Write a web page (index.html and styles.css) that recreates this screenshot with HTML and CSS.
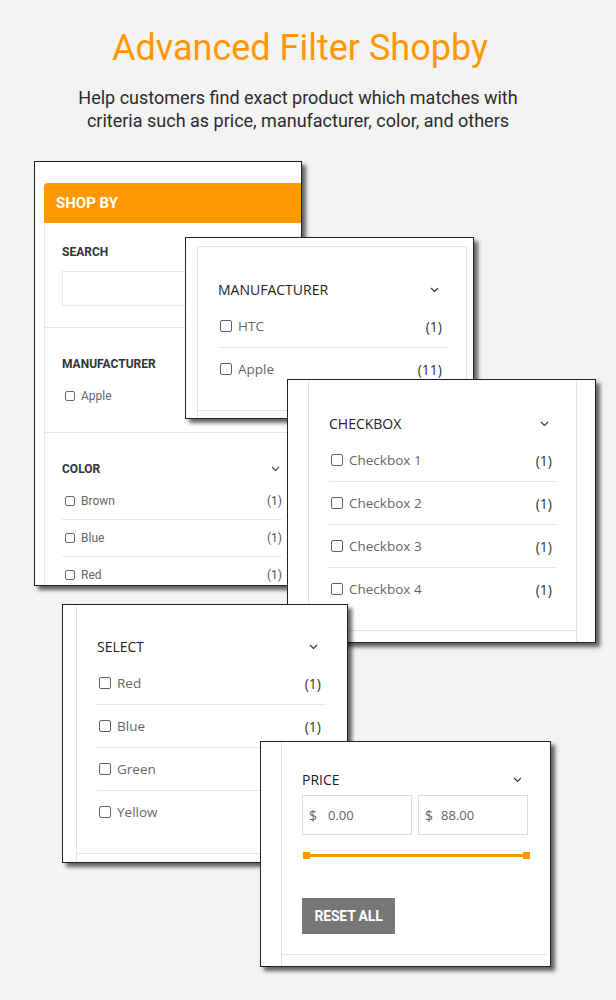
FILE: index.html
```html
<!DOCTYPE html>
<html lang="en">
<head>
<meta charset="utf-8">
<title>Advanced Filter Shopby</title>
<link rel="stylesheet" href="styles.css">
</head>
<body>
<header class="intro">
  <h1 class="intro-title">Advanced Filter Shopby</h1>
  <p class="intro-text">Help customers find exact product which matches with<br>criteria such as price, manufacturer, color, and others</p>
</header>

<main class="stage">
  <!-- Sidebar as it appears in the storefront -->
  <section class="card card-shopby">
    <div class="shopby-head">SHOP BY</div>
    <div class="shopby-panel">
      <div class="sb-block sb-search">
        <div class="sb-title">SEARCH</div>
        <div class="sb-input"></div>
      </div>
      <div class="sb-block">
        <div class="sb-title">MANUFACTURER</div>
        <ul class="sb-list">
          <li class="sb-row"><span class="cb cb-sm"></span><span class="sb-label">Apple</span></li>
        </ul>
      </div>
      <div class="sb-block sb-last">
        <div class="sb-title sb-title-row">COLOR
          <svg class="chev" width="9" height="6" viewBox="0 0 9 6"><path d="M1 1l3.5 3.5L8 1" fill="none" stroke="#444" stroke-width="1.1"/></svg>
        </div>
        <ul class="sb-list">
          <li class="sb-row"><span class="cb cb-sm"></span><span class="sb-label">Brown</span><span class="sb-count">(1)</span></li>
          <li class="sb-row"><span class="cb cb-sm"></span><span class="sb-label">Blue</span><span class="sb-count">(1)</span></li>
          <li class="sb-row"><span class="cb cb-sm"></span><span class="sb-label">Red</span><span class="sb-count">(1)</span></li>
        </ul>
      </div>
    </div>
  </section>

  <!-- Manufacturer filter -->
  <section class="card card-manu">
    <div class="panel panel-right">
      <div class="block block-framed">
        <div class="f-title">MANUFACTURER
          <svg class="chev" width="9" height="6" viewBox="0 0 9 6"><path d="M1 1l3.5 3.5L8 1" fill="none" stroke="#333" stroke-width="1.1"/></svg>
        </div>
        <ul class="f-list">
          <li class="f-row"><span class="cb"></span><span class="f-label">HTC</span><span class="f-count">(1)</span></li>
          <li class="f-row"><span class="cb"></span><span class="f-label">Apple</span><span class="f-count">(11)</span></li>
        </ul>
      </div>
    </div>
  </section>

  <!-- Checkbox filter -->
  <section class="card card-check">
    <div class="panel panel-right">
      <div class="block block-open">
        <div class="f-title">CHECKBOX
          <svg class="chev" width="9" height="6" viewBox="0 0 9 6"><path d="M1 1l3.5 3.5L8 1" fill="none" stroke="#333" stroke-width="1.1"/></svg>
        </div>
        <ul class="f-list">
          <li class="f-row"><span class="cb"></span><span class="f-label">Checkbox 1</span><span class="f-count">(1)</span></li>
          <li class="f-row"><span class="cb"></span><span class="f-label">Checkbox 2</span><span class="f-count">(1)</span></li>
          <li class="f-row"><span class="cb"></span><span class="f-label">Checkbox 3</span><span class="f-count">(1)</span></li>
          <li class="f-row"><span class="cb"></span><span class="f-label">Checkbox 4</span><span class="f-count">(1)</span></li>
        </ul>
      </div>
    </div>
  </section>

  <!-- Select filter -->
  <section class="card card-select">
    <div class="panel">
      <div class="block block-open block-select">
        <div class="f-title">SELECT
          <svg class="chev" width="9" height="6" viewBox="0 0 9 6"><path d="M1 1l3.5 3.5L8 1" fill="none" stroke="#333" stroke-width="1.1"/></svg>
        </div>
        <ul class="f-list">
          <li class="f-row"><span class="cb"></span><span class="f-label">Red</span><span class="f-count">(1)</span></li>
          <li class="f-row"><span class="cb"></span><span class="f-label">Blue</span><span class="f-count">(1)</span></li>
          <li class="f-row"><span class="cb"></span><span class="f-label">Green</span></li>
          <li class="f-row"><span class="cb"></span><span class="f-label">Yellow</span></li>
        </ul>
      </div>
    </div>
  </section>

  <!-- Price filter -->
  <section class="card card-price">
    <div class="panel">
      <div class="block block-open block-price">
        <div class="f-title">PRICE
          <svg class="chev" width="9" height="6" viewBox="0 0 9 6"><path d="M1 1l3.5 3.5L8 1" fill="none" stroke="#333" stroke-width="1.1"/></svg>
        </div>
        <div class="price-inputs">
          <div class="price-box"><span class="cur">$</span><span class="amt amt-min">0.00</span></div>
          <div class="price-box"><span class="cur">$</span><span class="amt">88.00</span></div>
        </div>
        <div class="range">
          <span class="handle"></span>
          <span class="track"></span>
          <span class="handle"></span>
        </div>
        <button class="reset" type="button">RESET ALL</button>
      </div>
    </div>
  </section>
</main>
</body>
</html>
```

FILE: styles.css
```css
* {
  box-sizing: border-box;
}

html,
body {
  margin: 0;
  padding: 0;
}

body {
  width: 616px;
  height: 1000px;
  overflow: hidden;
  background: #f3f3f3;
  font-family: Roboto, "Liberation Sans", sans-serif;
  color: #333;
}

ul {
  list-style: none;
  margin: 0;
  padding: 0;
}

/* ---------- intro ---------- */
.intro {
  height: 150px;
  padding: 28px 20px 0 0;
  text-align: center;
}

.intro-title {
  margin: 0;
  padding-left: 4px;
  font-size: 36px;
  line-height: 40px;
  font-weight: 400;
  color: #ff9800;
}

.intro-text {
  margin: 18px 0 0;
  font-size: 18px;
  line-height: 23px;
  color: #2b2b2b;
}

/* ---------- canvas of floating windows ---------- */
.stage {
  position: relative;
  height: 850px;
}

.card {
  position: absolute;
  overflow: hidden;
  background: #fff;
  border: 1px solid #222;
  box-shadow: 4px 4px 4px rgba(0, 0, 0, 0.6);
}

.card-shopby { left: 34px;  top: 11px;  width: 268px; height: 425px; padding: 21px 0 0 9px; }
.card-manu   { left: 185px; top: 87px;  width: 289px; height: 182px; padding-left: 11px; }
.card-check  { left: 287px; top: 229px; width: 309px; height: 264px; padding-left: 20px; }
.card-select { left: 62px;  top: 454px; width: 286px; height: 259px; padding-left: 13px; }
.card-price  { left: 260px; top: 591px; width: 291px; height: 226px; padding-left: 20px; }

/* ---------- storefront sidebar (Roboto) ---------- */
.shopby-head {
  height: 40px;
  padding-left: 12px;
  background: #ff9800;
  border-top-left-radius: 4px;
  color: #fff;
  font-size: 15px;
  font-weight: 700;
  line-height: 40px;
}

.shopby-panel {
  height: 400px;
  border-left: 1px solid #e6e6e6;
}

.sb-block {
  padding: 28px 19px 18px 17px;
  border-bottom: 1px solid #e6e6e6;
}

.sb-search {
  padding-top: 21px;
  padding-bottom: 21px;
}

.sb-last {
  border-bottom: 0;
}

.sb-title {
  font-size: 12px;
  line-height: 16px;
  font-weight: 700;
  color: #333;
}

.sb-title-row {
  display: flex;
  align-items: center;
  justify-content: space-between;
}

.sb-title-row .chev {
  margin-right: 2px;
}

.sb-input {
  height: 35px;
  margin-top: 11px;
  margin-right: -40px;
  border: 1px solid #e8e8e8;
  background: #fff;
}

.sb-list {
  margin-top: 6px;
}

.sb-row {
  display: flex;
  align-items: center;
  height: 37px;
  border-bottom: 1px solid #e6e6e6;
  font-size: 12px;
  color: #666;
}

.sb-row:last-child {
  height: 36px;
  border-bottom: 0;
}

.sb-label {
  flex: 1;
}

.sb-count {
  color: #555;
}

/* ---------- checkbox square ---------- */
.cb {
  flex: none;
  width: 12px;
  height: 12px;
  margin: 0 6px 0 2px;
  border: 1.4px solid #5f5f5f;
  border-radius: 2px;
  background: #fff;
}

.cb-sm {
  width: 10px;
  height: 10px;
  margin: 0 6px 0 3px;
  border-width: 1.2px;
  border-color: #6a6a6a;
}

/* ---------- module filter panels ---------- */
.panel {
  height: 100%;
  border-left: 1px solid #e3e3e3;
}

.panel-right {
  width: 270px;
  border-right: 1px solid #e3e3e3;
}

.card-check .panel-right {
  width: 269px;
}

.block {
  padding: 33px 19px 20px 20px;
  border-bottom: 1px solid #e3e3e3;
  font-family: "Open Sans", "Noto Sans", sans-serif;
}

.block-framed {
  margin-top: 8px;
  border-top: 1px solid #e3e3e3;
}

.block-open {
  padding-top: 34px;
}

.block-select {
  padding-top: 32px;
  width: 268px;
}

.block-price {
  padding-top: 28px;
  width: 265px;
}

.f-title {
  display: flex;
  align-items: center;
  justify-content: space-between;
  height: 20px;
  font-size: 14px;
  line-height: 20px;
  font-weight: 500;
  color: #222;
}

.f-title .chev {
  margin-right: 8px;
}

.block-price .f-title .chev {
  margin-right: 6px;
}

.f-list {
  margin-top: 5px;
}

.f-row {
  display: flex;
  align-items: center;
  height: 43px;
  border-bottom: 1px solid #e6e6e6;
  font-size: 13.5px;
  color: #666;
}

.f-row:last-child {
  height: 42px;
  border-bottom: 0;
}

.f-label {
  flex: 1;
}

.f-count {
  margin-right: 5px;
  font-size: 14px;
  color: #333;
}

/* ---------- price slider ---------- */
.price-inputs {
  display: grid;
  grid-template-columns: 1fr 1fr;
  gap: 6px;
  margin-top: 5px;
}

.price-box {
  display: flex;
  align-items: center;
  height: 40px;
  padding-left: 6px;
  border: 1px solid #dcdcdc;
  font-size: 13px;
  color: #666;
}

.cur {
  font-size: 14px;
  margin-right: 8px;
}

.amt-min {
  margin-left: 3px;
}

.range {
  display: flex;
  align-items: center;
  height: 7px;
  margin: 17px 0 0 1px;
  width: 227px;
}

.handle {
  flex: none;
  width: 7px;
  height: 7px;
  background: #ff9800;
}

.track {
  flex: 1;
  height: 3px;
  background: #ff9800;
}

.reset {
  display: block;
  width: 93px;
  height: 36px;
  margin-top: 39px;
  padding: 0;
  border: 0;
  background: #777;
  color: #fff;
  font-family: Roboto, "Liberation Sans", sans-serif;
  font-size: 14px;
  font-weight: 700;
  letter-spacing: -0.2px;
}
```
